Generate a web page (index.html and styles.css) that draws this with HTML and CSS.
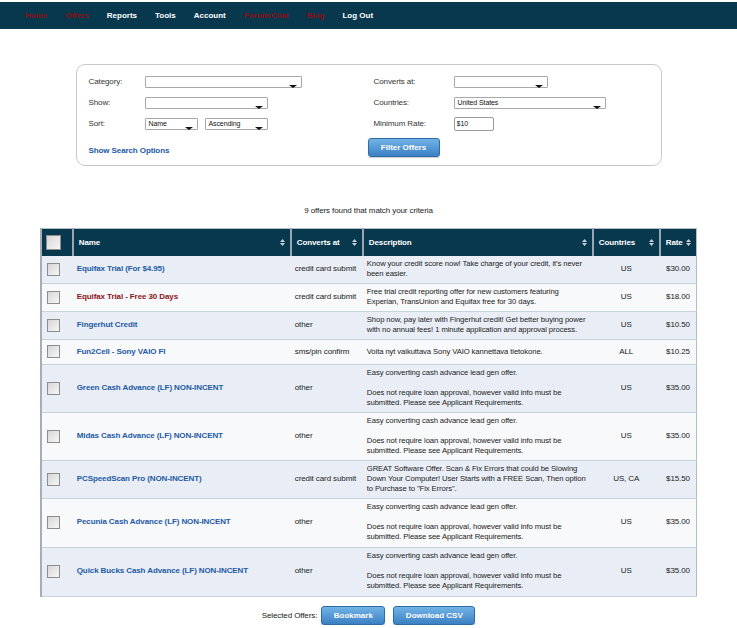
FILE: index.html
```
<!DOCTYPE html>
<html lang="en">

<head>
    <meta charset="UTF-8">
    <title>Offers</title>
    <link rel="stylesheet" href="styles.css">
</head>

<body>
    <nav class="topnav">
        <a href="#" class="red">Home</a>
        <a href="#" class="red">Offers</a>
        <a href="#">Reports</a>
        <a href="#">Tools</a>
        <a href="#">Account</a>
        <a href="#" class="red">Forum/Chat</a>
        <a href="#" class="red">Blog</a>
        <a href="#">Log Out</a>
    </nav>

    <form class="filters" action="#">
        <label>Category:</label>
        <div class="select w-category"><span></span></div>
        <label>Converts at:</label>
        <div class="select w-converts"><span></span></div>

        <label>Show:</label>
        <div class="select w-show"><span></span></div>
        <label>Countries:</label>
        <div class="select w-countries"><span>United States</span></div>

        <label>Sort:</label>
        <div class="sort-pair">
            <div class="select w-name"><span>Name</span></div>
            <div class="select w-order"><span>Ascending</span></div>
        </div>
        <label>Minimum Rate:</label>
        <input type="text" class="rate-input" value="$10">

        <a href="#" class="search-options">Show Search Options</a>
        <button type="button" class="btn filter-btn">Filter Offers</button>
    </form>

    <p class="found">9 offers found that match your criteria</p>

    <table class="offers">
        <colgroup>
            <col class="c-check">
            <col class="c-name">
            <col class="c-converts">
            <col class="c-desc">
            <col class="c-countries">
            <col class="c-rate">
        </colgroup>
        <thead>
            <tr>
                <th class="check-head"><input type="checkbox" class="head-box"></th>
                <th><div class="th-in">Name <svg class="sort" viewBox="0 0 5 7"><path d="M0 3L2.5 0 5 3Z M0 4H5L2.5 7Z"/></svg></div></th>
                <th><div class="th-in">Converts at <svg class="sort" viewBox="0 0 5 7"><path d="M0 3L2.5 0 5 3Z M0 4H5L2.5 7Z"/></svg></div></th>
                <th><div class="th-in">Description <svg class="sort" viewBox="0 0 5 7"><path d="M0 3L2.5 0 5 3Z M0 4H5L2.5 7Z"/></svg></div></th>
                <th><div class="th-in">Countries <svg class="sort" viewBox="0 0 5 7"><path d="M0 3L2.5 0 5 3Z M0 4H5L2.5 7Z"/></svg></div></th>
                <th><div class="th-in">Rate <svg class="sort" viewBox="0 0 5 7"><path d="M0 3L2.5 0 5 3Z M0 4H5L2.5 7Z"/></svg></div></th>
            </tr>
        </thead>
        <tbody>
            <tr>
                <td><input type="checkbox" class="box"></td>
                <td><a href="#" class="offer">Equifax Trial (For $4.95)</a></td>
                <td>credit card submit</td>
                <td class="desc">Know your credit score now! Take charge of your credit, it's never been easier.</td>
                <td class="center">US</td>
                <td class="center">$30.00</td>
            </tr>
            <tr>
                <td><input type="checkbox" class="box"></td>
                <td><a href="#" class="offer red">Equifax Trial - Free 30 Days</a></td>
                <td>credit card submit</td>
                <td class="desc">Free trial credit reporting offer for new customers featuring Experian, TransUnion and Equifax free for 30 days.</td>
                <td class="center">US</td>
                <td class="center">$18.00</td>
            </tr>
            <tr>
                <td><input type="checkbox" class="box"></td>
                <td><a href="#" class="offer">Fingerhut Credit</a></td>
                <td>other</td>
                <td class="desc">Shop now, pay later with Fingerhut credit! Get better buying power with no annual fees! 1 minute application and approval process.</td>
                <td class="center">US</td>
                <td class="center">$10.50</td>
            </tr>
            <tr>
                <td><input type="checkbox" class="box"></td>
                <td><a href="#" class="offer">Fun2Cell - Sony VAIO FI</a></td>
                <td>sms/pin confirm</td>
                <td class="desc">Voita nyt vaikuttava Sony VAIO kannettava tietokone.</td>
                <td class="center">ALL</td>
                <td class="center">$10.25</td>
            </tr>
            <tr>
                <td><input type="checkbox" class="box"></td>
                <td><a href="#" class="offer">Green Cash Advance (LF) NON-INCENT</a></td>
                <td>other</td>
                <td class="desc">Easy converting cash advance lead gen offer.<br><br>Does not require loan approval, however valid info must be submitted. Please see Applicant Requirements.</td>
                <td class="center">US</td>
                <td class="center">$35.00</td>
            </tr>
            <tr>
                <td><input type="checkbox" class="box"></td>
                <td><a href="#" class="offer">Midas Cash Advance (LF) NON-INCENT</a></td>
                <td>other</td>
                <td class="desc">Easy converting cash advance lead gen offer.<br><br>Does not require loan approval, however valid info must be submitted. Please see Applicant Requirements.</td>
                <td class="center">US</td>
                <td class="center">$35.00</td>
            </tr>
            <tr>
                <td><input type="checkbox" class="box"></td>
                <td><a href="#" class="offer">PCSpeedScan Pro (NON-INCENT)</a></td>
                <td>credit card submit</td>
                <td class="desc">GREAT Software Offer. Scan &amp; Fix Errors that could be Slowing Down Your Computer! User Starts with a FREE Scan, Then option to Purchase to "Fix Errors".</td>
                <td class="center">US, CA</td>
                <td class="center">$15.50</td>
            </tr>
            <tr>
                <td><input type="checkbox" class="box"></td>
                <td><a href="#" class="offer">Pecunia Cash Advance (LF) NON-INCENT</a></td>
                <td>other</td>
                <td class="desc">Easy converting cash advance lead gen offer.<br><br>Does not require loan approval, however valid info must be submitted. Please see Applicant Requirements.</td>
                <td class="center">US</td>
                <td class="center">$35.00</td>
            </tr>
            <tr>
                <td><input type="checkbox" class="box"></td>
                <td><a href="#" class="offer">Quick Bucks Cash Advance (LF) NON-INCENT</a></td>
                <td>other</td>
                <td class="desc">Easy converting cash advance lead gen offer.<br><br>Does not require loan approval, however valid info must be submitted. Please see Applicant Requirements.</td>
                <td class="center">US</td>
                <td class="center">$35.00</td>
            </tr>
        </tbody>
    </table>

    <div class="selected-actions">
        <span>Selected Offers:</span>
        <button type="button" class="btn bookmark-btn">Bookmark</button>
        <button type="button" class="btn csv-btn">Download CSV</button>
    </div>
</body>

</html>
```

FILE: styles.css
```
body {
    margin: 0;
    font-family: "Liberation Sans", Arial, sans-serif;
    font-size: 8px;
    letter-spacing: -0.1px;
    color: #222;
    background-color: white;
}

a {
    text-decoration: none;
}

/* top navigation */
.topnav {
    margin-top: 2px;
    height: 27px;
    background-color: #07384d;
    display: flex;
    align-items: center;
    gap: 18px;
    padding-left: 25px;
}

.topnav a {
    color: white;
    font-weight: bold;
    font-size: 8px;
    letter-spacing: 0;
}

.topnav a.red {
    color: #8c0f16;
}

/* filter box */
.filters {
    box-sizing: border-box;
    width: 586px;
    margin: 35px auto 0;
    padding: 10px 12px 8px;
    border: 1px solid #c9c9c9;
    border-radius: 9px;
    display: grid;
    grid-template-columns: 56px 229px 80px 1fr;
    grid-template-rows: 13px 13px 13px 19px;
    row-gap: 8px;
}

.filters label {
    align-self: center;
    color: #333;
}

.select {
    position: relative;
    box-sizing: border-box;
    height: 12px;
    align-self: center;
    border: 1px solid #a8a8a8;
    border-radius: 1px;
    background-color: white;
    font-size: 7px;
    line-height: 10px;
    padding-left: 3px;
    color: #111;
}

.select::after {
    content: "";
    position: absolute;
    right: 4px;
    bottom: -1px;
    border-left: 4px solid transparent;
    border-right: 4px solid transparent;
    border-top: 3px solid #111;
}

.w-category { width: 157px; }
.w-show { width: 123px; }
.w-name { width: 53px; }
.w-order { width: 63px; }
.w-converts { width: 94px; }
.w-countries { width: 152px; }

.sort-pair {
    display: flex;
    gap: 7px;
    align-items: center;
}

.rate-input {
    box-sizing: border-box;
    width: 40px;
    height: 14px;
    align-self: center;
    border: 1px solid #9a9a9a;
    border-radius: 2px;
    font-family: inherit;
    font-size: 7px;
    padding: 0 2px;
    color: #111;
}

.search-options {
    grid-column: 1 / 3;
    align-self: center;
    margin-top: 5px;
    color: #2459a5;
    font-weight: bold;
}

.btn {
    box-sizing: border-box;
    height: 19px;
    border: 1px solid #2f6ba6;
    border-radius: 3px;
    background: linear-gradient(#72b3e6, #3b80c4);
    color: white;
    font-family: inherit;
    font-weight: bold;
    font-size: 8px;
    padding: 0;
    box-shadow: 0 1px 1px rgba(0, 0, 0, 0.2);
    cursor: pointer;
}

.filter-btn {
    grid-column: 3 / 5;
    width: 72px;
    margin-left: -6px;
}

/* results */
.found {
    margin: 40px 0 12px;
    text-align: center;
    line-height: 10px;
}

.offers {
    width: 656px;
    margin: 0 auto;
    table-layout: fixed;
    border-collapse: collapse;
    border: 1px solid #b4bcc3;
    border-left: 2px solid #a5aeb6;
}

.c-check { width: 32px; }
.c-name { width: 218px; }
.c-converts { width: 72px; }
.c-desc { width: 230px; }
.c-countries { width: 67px; }
.c-rate { width: 37px; }

.offers th {
    height: 27px;
    padding: 0 5px;
    background-color: #07384d;
    color: white;
    font-weight: bold;
    text-align: left;
    border-left: 2px solid #9aa7b1;
}

.offers th:first-child {
    border-left: none;
    padding: 0 0 0 4px;
}

.th-in {
    display: flex;
    justify-content: space-between;
    align-items: center;
}

.sort {
    width: 5px;
    height: 7px;
    fill: #c7d0d8;
}

.offers td {
    padding: 3px 4px 4px;
    line-height: 10px;
    vertical-align: middle;
    border-bottom: 1px solid #c8d3e0;
}

.offers td:first-child {
    padding-left: 5px;
}

.offers td.desc {
    padding-right: 2px;
    font-size: 7.7px;
}

.offers tbody tr:nth-child(n+8) td {
    padding-bottom: 5px;
}

.offers tbody tr:nth-child(odd) {
    background-color: #e9eef6;
}

.offers tbody tr:nth-child(even) {
    background-color: #f8f9fb;
}

.center {
    text-align: center;
}

.offer {
    color: #2459a5;
    font-weight: bold;
}

.offer.red {
    color: #8c1518;
}

input[type="checkbox"] {
    appearance: none;
    display: block;
    margin: 2px 0;
    box-sizing: border-box;
    border: 1px solid #8d8d8d;
    background: linear-gradient(135deg, #d6d6d6, #f6f6f6);
}

.box {
    width: 13px;
    height: 13px;
}

.head-box {
    width: 15px;
    height: 15px;
    background: linear-gradient(135deg, #e0e0e0, #ffffff);
}

/* bottom actions */
.selected-actions {
    display: flex;
    justify-content: center;
    align-items: center;
    margin-top: 9px;
    gap: 4px;
}

.bookmark-btn {
    width: 64px;
    margin-right: 4px;
}

.csv-btn {
    width: 82px;
}
```
